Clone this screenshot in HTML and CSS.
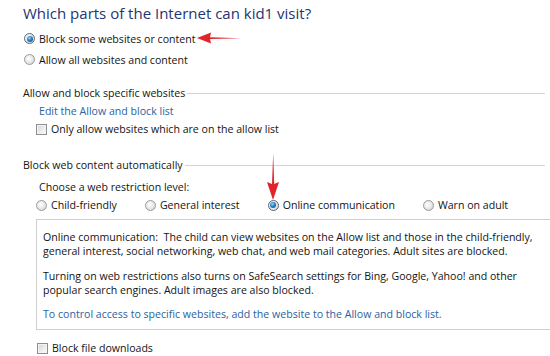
FILE: index.html
```html
<!DOCTYPE html>
<html>
<head>
<meta charset="utf-8">
<link rel="stylesheet" href="styles.css">
</head>
<body>
<div class="page">
  <h1 class="title">Which parts of the Internet can kid1 visit?</h1>

  <div class="options">
    <div class="opt"><span class="radio on"></span><span>Block some websites or content</span></div>
    <div class="opt"><span class="radio"></span><span>Allow all websites and content</span></div>
  </div>

  <section class="group g1">
    <div class="group-head"><span>Allow and block specific websites</span></div>
    <div class="group-body">
      <div class="link-row"><a class="link">Edit the Allow and block list</a></div>
      <div class="chk-row"><span class="chk"></span><span>Only allow websites which are on the allow list</span></div>
    </div>
  </section>

  <section class="group g2">
    <div class="group-head"><span>Block web content automatically</span></div>
    <div class="group-body">
      <div class="choose">Choose a web restriction level:</div>
      <div class="levels">
        <div class="lvl"><span class="radio"></span><span>Child-friendly</span></div>
        <div class="lvl"><span class="radio"></span><span>General interest</span></div>
        <div class="lvl"><span class="radio on"></span><span>Online communication</span></div>
        <div class="lvl"><span class="radio"></span><span>Warn on adult</span></div>
      </div>
      <div class="desc">
        <p>Online communication:&nbsp; The child can view websites on the Allow list and those in the child-friendly,<br>general interest, social networking, web chat, and web mail categories. Adult sites are blocked.</p>
        <p>Turning on web restrictions also turns on SafeSearch settings for Bing, Google, Yahoo! and other<br>popular search engines. Adult images are also blocked.</p>
        <p class="desc-link">To control access to specific websites, add the website to the Allow and block list.</p>
      </div>
      <div class="chk-row bfd"><span class="chk"></span><span>Block file downloads</span></div>
    </div>
  </section>

  <svg class="arrow arrow-left" width="46" height="14" viewBox="0 0 46 14">
    <path d="M45 7.2 L14 6.2 L15 1.5 L1 7 L15 12.5 L14 8 Z" fill="#e2232b"/>
  </svg>
  <svg class="arrow arrow-down" width="14" height="48" viewBox="0 0 14 48">
    <path d="M7.2 0 L6 31 L1 29 L7 47 L13 29 L8.2 31 Z" fill="#e2232b"/>
  </svg>
</div>
</body>
</html>
```

FILE: styles.css
```css
html, body {
  margin: 0;
  padding: 0;
  background: #ffffff;
}

.page {
  position: relative;
  width: 550px;
  height: 356px;
  overflow: hidden;
  padding: 0 5px 0 23px;
  box-sizing: border-box;
  font-family: "Open Sans", "Noto Sans", sans-serif;
  font-size: 10.6px;
  color: #141414;
}

.title {
  margin: 0;
  font-weight: normal;
  font-size: 15px;
  line-height: 26px;
  color: #1f3473;
}

.options {
  padding-top: 2px;
}

.opt {
  display: flex;
  align-items: center;
  height: 21px;
}

.radio {
  position: relative;
  display: inline-block;
  flex: none;
  width: 11px;
  height: 11px;
  border-radius: 50%;
  border: 1px solid #9a9a9a;
  background: radial-gradient(circle at 40% 40%, #ffffff 0%, #e6e6e6 55%, #c9c9c9 100%);
  box-sizing: border-box;
  margin-right: 4px;
}

.radio.on {
  border-color: #56697c;
}

.radio.on::after {
  content: "";
  position: absolute;
  left: 1.5px;
  top: 1.5px;
  width: 6px;
  height: 6px;
  border-radius: 50%;
  background: radial-gradient(circle at 40% 35%, #9ad6f7 0%, #2a7fc0 45%, #143d66 100%);
}

.opt .radio {
  margin-left: 1px;
}

.group-head {
  display: flex;
  align-items: center;
  height: 18px;
}

.group-head::after {
  content: "";
  flex: 1;
  height: 1px;
  background: #d4d4d4;
  margin-left: 2px;
}

.g1 {
  margin-top: 14px;
}

.g2 {
  margin-top: 18px;
}

.group-body {
  padding-left: 13px;
}

.link-row {
  height: 18px;
  line-height: 18px;
  padding-left: 3px;
}

.link {
  color: #2c62a0;
  text-decoration: none;
}

.chk-row {
  display: flex;
  align-items: center;
  height: 18px;
}

.chk {
  display: inline-block;
  flex: none;
  width: 11px;
  height: 11px;
  border: 1px solid #8e8e8e;
  box-sizing: border-box;
  background: linear-gradient(135deg, #d2d2d2 0%, #eeeeee 60%, #ffffff 100%);
  box-shadow: inset 0 0 0 1px #f4f4f4;
  margin-right: 4px;
}

.choose {
  margin-top: 4px;
  height: 18px;
  line-height: 18px;
  padding-left: 3px;
}

.levels {
  display: flex;
  align-items: center;
  gap: 28px;
  height: 18px;
}

.lvl {
  display: flex;
  align-items: center;
}

.desc {
  margin-top: 5px;
  margin-right: -20px;
  border: 1px solid #cfcfcf;
  padding: 10px 6px 8px 6px;
  line-height: 14px;
  white-space: nowrap;
}

.desc p {
  margin: 0;
}

.desc p + p {
  margin-top: 11px;
}

.desc .desc-link {
  margin-top: 10px;
  color: #2c62a0;
}

.bfd {
  margin-top: 9px;
  padding-left: 1px;
}

.arrow {
  position: absolute;
}

.arrow-left {
  left: 196px;
  top: 31px;
}

.arrow-down {
  left: 266px;
  top: 153px;
}
```
